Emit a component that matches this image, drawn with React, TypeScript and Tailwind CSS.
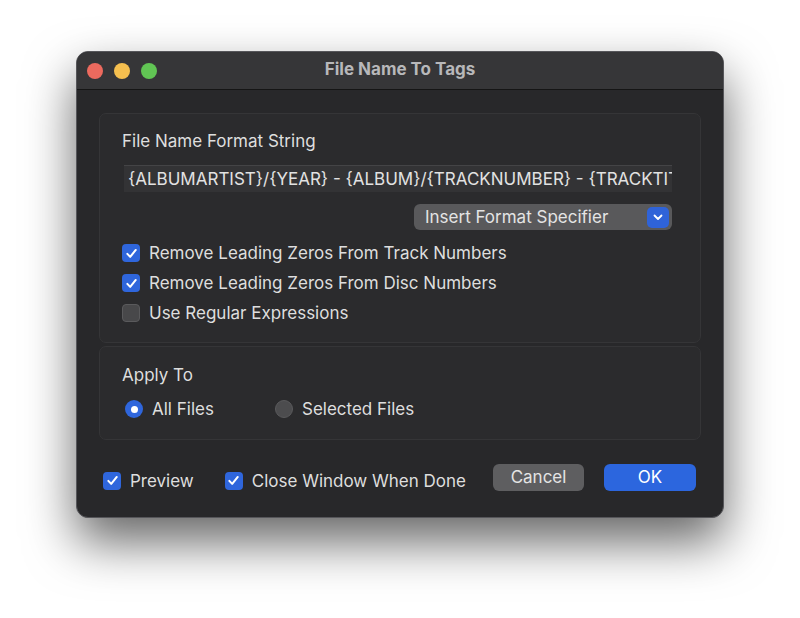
import React from "react";

const font = { fontFamily: "Inter, 'Noto Sans', 'Liberation Sans', sans-serif" };

function Check({ checked }: { checked: boolean }) {
  if (!checked) {
    return (
      <span className="w-[18px] h-[18px] rounded-[4px] bg-[#48484a] border border-[#5a5a5c] shrink-0" />
    );
  }
  return (
    <span className="w-[18px] h-[18px] rounded-[4px] bg-[#2f66dc] shrink-0 flex items-center justify-center">
      <svg width="13" height="13" viewBox="0 0 14 14" fill="none">
        <path d="M2.5 7.4 L5.6 10.6 L11.6 3.2" stroke="white" strokeWidth="2.2" strokeLinecap="round" strokeLinejoin="round" />
      </svg>
    </span>
  );
}

function CheckRow({ checked, label }: { checked: boolean; label: string }) {
  return (
    <div className="flex items-center gap-[9px] h-[20px]">
      <Check checked={checked} />
      <span className="text-[17px] text-[#dedede] leading-[20px]">{label}</span>
    </div>
  );
}

function Radio({ selected, label }: { selected: boolean; label: string }) {
  return (
    <div className="flex items-center gap-[9px]">
      {selected ? (
        <span className="w-[18px] h-[18px] rounded-full bg-[#2f66dc] flex items-center justify-center shrink-0">
          <span className="w-[7px] h-[7px] rounded-full bg-white" />
        </span>
      ) : (
        <span className="w-[18px] h-[18px] rounded-full bg-[#4c4c4e] border border-[#5a5a5c] shrink-0" />
      )}
      <span className="text-[17px] text-[#dedede] leading-[20px]">{label}</span>
    </div>
  );
}

export default function App() {
  return (
    <div className="w-[800px] h-[618px] bg-white overflow-hidden pt-[51px] pl-[76px]" style={font}>
      <div className="w-[648px] h-[467px] rounded-[12px] bg-[#28282a] border border-[#56565a] shadow-[0_24px_50px_rgba(0,0,0,0.6)] overflow-hidden flex flex-col">
        {/* Title bar */}
        <div className="h-[38px] bg-[#363638] border-b border-[#151515] flex items-center relative shrink-0">
          <div className="flex items-center gap-[11px] pl-[10px]">
            <span className="w-[16px] h-[16px] rounded-full bg-[#ed6a5e]" />
            <span className="w-[16px] h-[16px] rounded-full bg-[#f5bf4f]" />
            <span className="w-[16px] h-[16px] rounded-full bg-[#61c554]" />
          </div>
          <div className="absolute inset-0 flex items-center justify-center pointer-events-none pb-[2px]">
            <span className="text-[17px] font-bold text-[#b8b8ba]">File Name To Tags</span>
          </div>
        </div>

        {/* Body */}
        <div className="flex flex-col px-[22px] pt-[23px]">
          {/* Box 1 */}
          <div className="h-[230px] rounded-[7px] bg-[#2b2b2d] border border-[#353537] pl-[22px] pr-[28px] pt-[17px] flex flex-col">
            <div className="text-[17px] text-[#dedede] leading-[20px]">File Name Format String</div>
            <div className="mt-[14px] ml-[2px] h-[27px] bg-[#333335] border-t border-[#444446] overflow-hidden whitespace-nowrap pl-[4px] flex items-center">
              <span className="text-[17px] text-[#e2e2e2] leading-[20px]">
                {"{ALBUMARTIST}/{YEAR} - {ALBUM}/{TRACKNUMBER} - {TRACKTITLE}"}
              </span>
            </div>
            <div className="mt-[12px] flex justify-end">
              <div className="w-[258px] h-[26px] rounded-[6px] bg-[#59595b] flex items-center justify-between pl-[11px] pr-[3px]">
                <span className="text-[17px] text-[#e4e4e4] leading-[20px]">Insert Format Specifier</span>
                <span className="w-[22px] h-[21px] rounded-[5px] bg-[#2f63d8] flex items-center justify-center">
                  <svg width="10" height="7" viewBox="0 0 10 7" fill="none">
                    <path d="M1.5 1.5 L5 5 L8.5 1.5" stroke="white" strokeWidth="1.8" strokeLinecap="round" strokeLinejoin="round" />
                  </svg>
                </span>
              </div>
            </div>
            <div className="mt-[13px] flex flex-col gap-[10px]">
              <CheckRow checked label="Remove Leading Zeros From Track Numbers" />
              <CheckRow checked label="Remove Leading Zeros From Disc Numbers" />
              <CheckRow checked={false} label="Use Regular Expressions" />
            </div>
          </div>

          {/* Box 2 */}
          <div className="mt-[3px] h-[94px] rounded-[7px] bg-[#2b2b2d] border border-[#353537] pl-[22px] pt-[18px] flex flex-col">
            <div className="text-[17px] text-[#dedede] leading-[20px]">Apply To</div>
            <div className="mt-[14px] ml-[3px] flex items-center">
              <div className="w-[150px]">
                <Radio selected label="All Files" />
              </div>
              <Radio selected={false} label="Selected Files" />
            </div>
          </div>

          {/* Bottom row */}
          <div className="mt-[24px] flex items-center">
            <div className="flex items-center gap-[31px] pt-[6px] pl-[4px]">
              <CheckRow checked label="Preview" />
              <CheckRow checked label="Close Window When Done" />
            </div>
            <div className="ml-auto flex items-center gap-[20px] mr-[5px]">
              <div className="w-[91px] h-[27px] rounded-[6px] bg-[#5e5e60] flex items-center justify-center text-[17px] text-[#e4e4e4]">Cancel</div>
              <div className="w-[92px] h-[27px] rounded-[6px] bg-[#2c66de] flex items-center justify-center text-[17px] text-white">OK</div>
            </div>
          </div>
        </div>
      </div>
    </div>
  );
}
